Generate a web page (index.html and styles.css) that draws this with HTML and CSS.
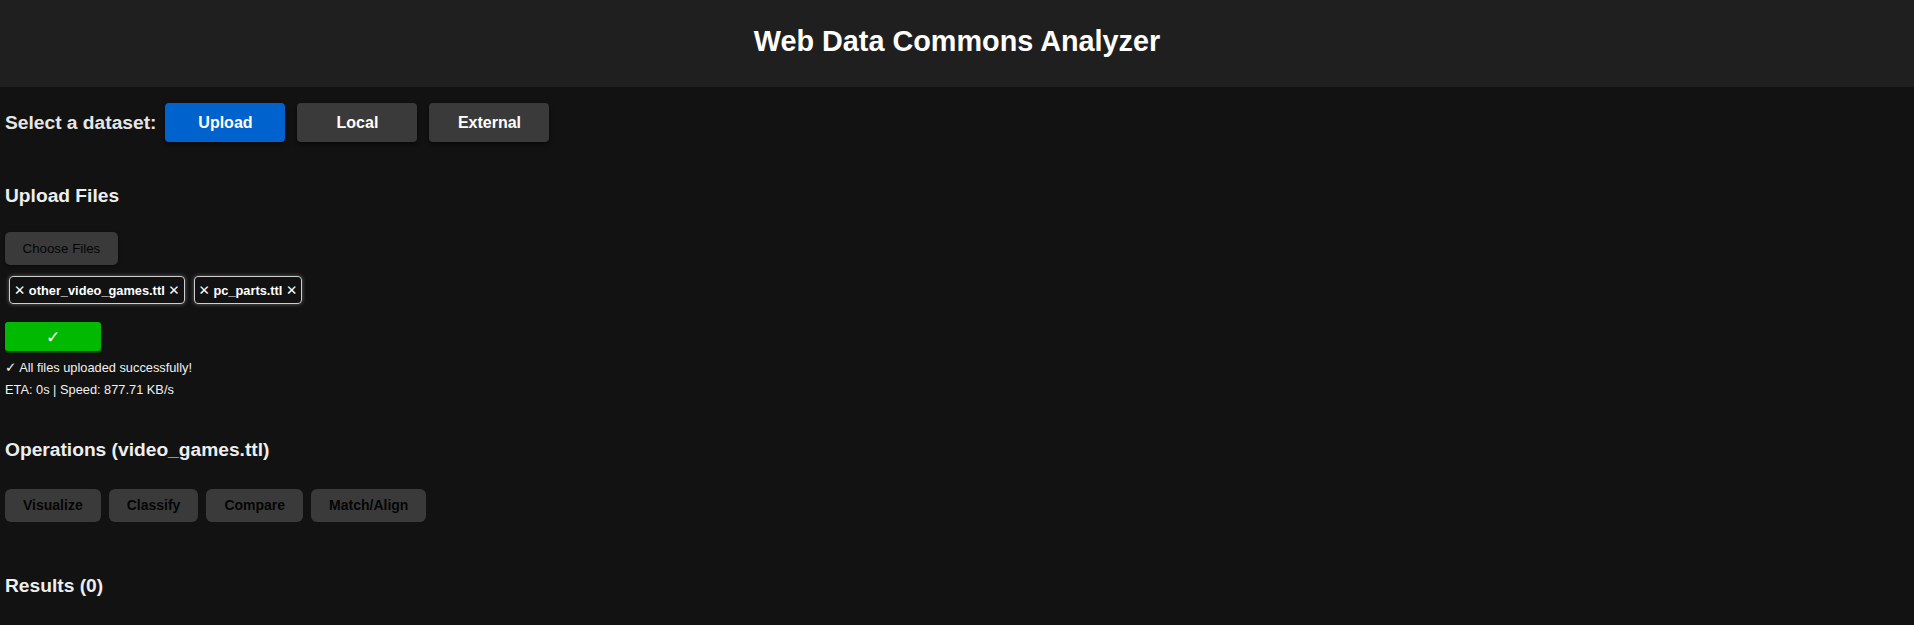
FILE: index.html
```html
<!DOCTYPE html>
<html lang="en">
<head>
<meta charset="utf-8">
<title>Web Data Commons Analyzer</title>
<link rel="stylesheet" href="styles.css">
</head>
<body>
<header class="app-header">
  <h1 class="title">Web Data Commons Analyzer</h1>
</header>
<main class="content">
  <div class="dataset-row">
    <span class="dataset-label">Select a dataset:</span>
    <button class="ds-btn active">Upload</button>
    <button class="ds-btn">Local</button>
    <button class="ds-btn">External</button>
  </div>

  <section class="upload">
    <h3 class="section-title">Upload Files</h3>
    <label class="choose-btn">Choose Files</label>
    <div class="chip-list">
      <span class="chip"><span class="x">✕</span> other_video_games.ttl <span class="x">✕</span></span>
      <span class="chip"><span class="x">✕</span> pc_parts.ttl <span class="x">✕</span></span>
    </div>
    <button class="done-btn">✓</button>
    <div class="status"><span class="tick">✓</span> All files uploaded successfully!</div>
    <div class="status eta">ETA: 0s | Speed: 877.71 KB/s</div>
  </section>

  <section class="operations">
    <h3 class="section-title ops-title">Operations (video_games.ttl)</h3>
    <div class="op-row">
      <button class="op-btn">Visualize</button>
      <button class="op-btn">Classify</button>
      <button class="op-btn">Compare</button>
      <button class="op-btn">Match/Align</button>
    </div>
  </section>

  <section class="results">
    <h3 class="section-title results-title">Results (0)</h3>
  </section>
</main>
</body>
</html>
```

FILE: styles.css
```css
* { box-sizing: border-box; }

html, body {
  margin: 0;
  padding: 0;
  background: #121212;
  color: #eeeeee;
  font-family: "Liberation Sans", Arial, sans-serif;
}

.app-header {
  background: #1f1f1f;
  height: 87px;
  padding: 25px 0 0;
}

.title {
  margin: 0;
  text-align: center;
  font-size: 28.8px;
  line-height: 33px;
  font-weight: bold;
  color: #ffffff;
}

.content {
  padding: 0 5px;
}

.dataset-row {
  display: flex;
  align-items: center;
  margin-top: 16px;
}

.dataset-label {
  font-size: 19.2px;
  font-weight: bold;
  color: #e6e6e6;
  margin-right: 9px;
}

.ds-btn {
  width: 120px;
  height: 39px;
  padding: 0;
  margin: 0 12px 0 0;
  border: none;
  border-radius: 4px;
  background: #3a3a3a;
  color: #ffffff;
  font-family: "Liberation Sans", Arial, sans-serif;
  font-size: 16px;
  font-weight: bold;
  line-height: 19px;
  box-shadow: 0 2px 4px rgba(0, 0, 0, 0.5);
}

.ds-btn.active {
  background: #0062cc;
}

.section-title {
  margin: 43px 0 0;
  font-size: 19.2px;
  line-height: 22px;
  font-weight: bold;
  color: #eeeeee;
}

.choose-btn {
  display: inline-block;
  margin-top: 25px;
  padding: 8px 17.5px;
  line-height: 17px;
  font-size: 13.33px;
  color: #050505;
  background: #3a3a3a;
  border-radius: 5px;
  box-shadow: 0 1px 3px rgba(0, 0, 0, 0.5);
}

.chip-list {
  display: flex;
  gap: 9px;
  margin-top: 11px;
  padding-left: 4px;
}

.chip {
  display: inline-block;
  height: 28px;
  padding: 5px 4px 0;
  border: 1px solid #cfcfcf;
  border-radius: 4px;
  font-size: 12.8px;
  line-height: 16px;
  font-weight: bold;
  color: #ffffff;
  box-shadow: 0 0 4px rgba(255, 255, 255, 0.35);
}

.chip .x {
  font-family: "DejaVu Sans", sans-serif;
  font-size: 13.5px;
  font-weight: bold;
}

.done-btn {
  display: block;
  width: 96px;
  height: 29px;
  margin-top: 18px;
  padding: 0;
  border: none;
  border-radius: 3px;
  background: #00b900;
  color: #ffffff;
  font-family: "DejaVu Sans", sans-serif;
  font-size: 17px;
  font-weight: bold;
  box-shadow: 0 2px 2px rgba(0, 0, 0, 0.6), 0 2px 0 #0a6e0a;
}

.status {
  margin-top: 9px;
  font-size: 12.8px;
  line-height: 15px;
  color: #f0f0f0;
}

.status .tick {
  font-family: "DejaVu Sans", sans-serif;
  font-weight: bold;
  font-size: 13.5px;
}

.status.eta {
  margin-top: 7px;
}

.ops-title {
  margin-top: 42px;
}

.op-row {
  display: flex;
  gap: 8px;
  margin-top: 28px;
}

.op-btn {
  height: 33px;
  padding: 0 18px;
  margin: 0;
  border: none;
  border-radius: 6px;
  background: #3a3a3a;
  color: #050505;
  font-family: "Liberation Sans", Arial, sans-serif;
  font-size: 14px;
  font-weight: bold;
  line-height: 17px;
}

.results-title {
  margin-top: 53px;
}
```
